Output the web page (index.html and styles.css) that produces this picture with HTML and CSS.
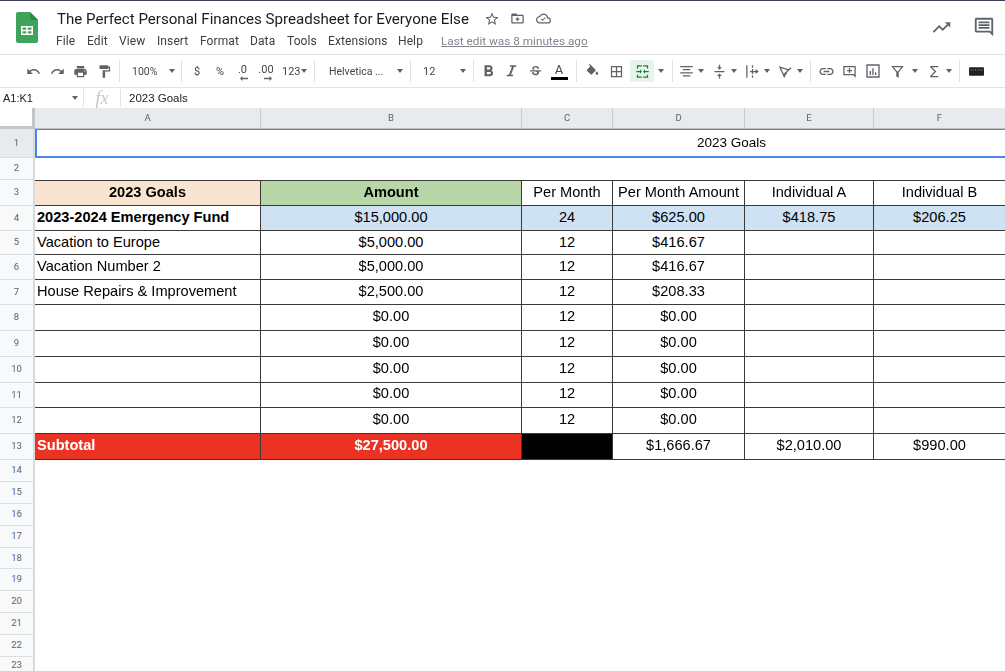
FILE: index.html
```html
<!DOCTYPE html>
<html lang="en">
<head>
<meta charset="utf-8">
<title>The Perfect Personal Finances Spreadsheet for Everyone Else</title>
<link rel="stylesheet" href="styles.css">
</head>
<body>
<div class="page">
  <header class="head">
    <svg class="logo" viewBox="0 0 22 31"><path fill="#3fa45b" d="M2 0h12l8 8v21a2 2 0 0 1-2 2H2a2 2 0 0 1-2-2V2a2 2 0 0 1 2-2z"/><path fill="#2b8a45" d="M14 0l8 8h-6a2 2 0 0 1-2-2z"/><path fill="#fff" d="M5 14h12v9H5zm1.5 1.5v2.2h3.7v-2.2zm5.3 0v2.2h3.7v-2.2zm-5.3 3.7v2.3h3.7v-2.3zm5.3 0v2.3h3.7v-2.3z" fill-rule="evenodd"/></svg>
    <div class="head-main">
      <div class="title-row">
        <h1 class="doc-title">The Perfect Personal Finances Spreadsheet for Everyone Else</h1>
        <svg class="doc-ic star" viewBox="0 0 24 24"><path d="M22 9.24l-7.19-.62L12 2 9.19 8.63 2 9.24l5.46 4.73L5.82 21 12 17.27 18.18 21l-1.63-7.03L22 9.24zM12 15.4l-3.76 2.27 1-4.28-3.32-2.88 4.38-.38L12 6.1l1.71 4.04 4.38.38-3.32 2.88 1 4.28L12 15.4z"/></svg>
        <svg class="doc-ic" viewBox="0 0 24 24"><path d="M20 6h-8l-2-2H4c-1.1 0-2 .9-2 2v12c0 1.1.9 2 2 2h16c1.1 0 2-.9 2-2V8c0-1.1-.9-2-2-2zm0 12H4V8h16v10z"/><path d="M11 10h2v2h2v2h-2v2h-2v-2H9v-2h2z"/></svg>
        <svg class="doc-ic" viewBox="0 0 24 24"><path d="M19.35 10.04C18.67 6.59 15.64 4 12 4 9.11 4 6.6 5.64 5.35 8.04 2.34 8.36 0 10.91 0 14c0 3.31 2.69 6 6 6h13c2.76 0 5-2.24 5-5 0-2.64-2.05-4.78-4.65-4.96zM19 18H6c-2.21 0-4-1.79-4-4 0-2.05 1.53-3.76 3.56-3.97l1.07-.11.5-.95C8.08 7.14 9.94 6 12 6c2.62 0 4.88 1.86 5.39 4.43l.3 1.5 1.53.11c1.56.1 2.78 1.41 2.78 2.96 0 1.65-1.35 3-3 3z"/><path d="M10.5 13.6l-1.6-1.6-1.1 1.1 2.7 2.7 4.9-4.9-1.1-1.1z"/></svg>
      </div>
      <nav class="menu">
        <span class="m-file">File</span><span class="m-edit">Edit</span><span class="m-view">View</span><span class="m-insert">Insert</span><span class="m-format">Format</span><span class="m-data">Data</span><span class="m-tools">Tools</span><span class="m-ext">Extensions</span><span class="m-help">Help</span>
        <a class="last-edit">Last edit was 8 minutes ago</a>
      </nav>
    </div>
    <div class="head-right">
      <svg class="trend" viewBox="0 0 24 24"><path d="M16 6l2.29 2.29-4.88 4.88-4-4L2 16.59 3.41 18l6-6 4 4 6.3-6.29L22 12V6z"/></svg>
      <svg class="comments" viewBox="0 0 24 24"><path d="M21.99 4c0-1.1-.89-2-1.99-2H4c-1.1 0-2 .9-2 2v12c0 1.1.9 2 2 2h14l4 4-.01-18zM20 4v13.17L18.83 16H4V4h16zM6 12h12v2H6zm0-3h12v2H6zm0-3h12v2H6z"/></svg>
    </div>
  </header>

  <div class="toolbar">
    <span class="b w24"><svg class="ic" viewBox="0 0 24 24"><path d="M12.5 8c-2.65 0-5.05.99-6.9 2.6L2 7v9h9l-3.62-3.62c1.39-1.16 3.16-1.88 5.12-1.88 3.54 0 6.55 2.31 7.6 5.5l2.37-.78C21.08 11.03 17.15 8 12.5 8z"/></svg></span>
    <span class="b w24"><svg class="ic" viewBox="0 0 24 24"><path d="M18.4 10.6C16.55 8.99 14.15 8 11.5 8c-4.65 0-8.58 3.03-9.96 7.22L3.9 16c1.05-3.19 4.05-5.5 7.6-5.5 1.95 0 3.73.72 5.12 1.88L13 16h9V7l-3.6 3.6z"/></svg></span>
    <span class="b w23"><svg class="ic" viewBox="0 0 24 24"><path d="M19 8H5c-1.66 0-3 1.34-3 3v6h4v4h12v-4h4v-6c0-1.66-1.34-3-3-3zm-3 11H8v-5h8v5zm3-7c-.55 0-1-.45-1-1s.45-1 1-1 1 .45 1 1-.45 1-1 1zm-1-9H6v4h12V3z"/></svg></span>
    <span class="b w24"><svg class="ic" viewBox="0 0 24 24"><path d="M18 4V3c0-.55-.45-1-1-1H5c-.55 0-1 .45-1 1v4c0 .55.45 1 1 1h12c.55 0 1-.45 1-1V6h1v4H9v11c0 .55.45 1 1 1h2c.55 0 1-.45 1-1v-9h8V4h-3z"/></svg></span>
    <i class="sep"></i>
    <span class="drop zoom"><span>100%</span><i class="caret"></i></span>
    <i class="sep"></i>
    <span class="b w24 t">$</span>
    <span class="b w22 t">%</span>
    <span class="b w23 t stack"><span>.0</span><svg class="tiny" viewBox="0 0 10 6"><path d="M0 3l3-3v2h7v2H3v2z"/></svg></span>
    <span class="b w24 t stack"><span>.00</span><svg class="tiny" viewBox="0 0 10 6"><path d="M10 3L7 0v2H0v2h7v2z"/></svg></span>
    <span class="drop fmt"><span>123</span><i class="caret"></i></span>
    <i class="sep"></i>
    <span class="drop font"><span>Helvetica ...</span><i class="caret"></i></span>
    <i class="sep"></i>
    <span class="drop size"><span>12</span><i class="caret"></i></span>
    <i class="sep"></i>
    <span class="b w22"><svg class="ic big" viewBox="0 0 24 24"><path d="M15.6 10.79c.97-.67 1.65-1.77 1.65-2.79 0-2.26-1.75-4-4-4H7v14h7.04c2.09 0 3.71-1.7 3.71-3.79 0-1.52-.86-2.82-2.15-3.42zM10 6.5h3c.83 0 1.5.67 1.5 1.5s-.67 1.5-1.5 1.500h-3v-3zm3.500 9H10v-3h3.500c.83 0 1.500.67 1.500 1.500s-.67 1.500-1.500 1.500z"/></svg></span>
    <span class="b w24"><svg class="ic big" viewBox="0 0 24 24"><path d="M10 4v2h2.600l-3.800 10H6v2h8v-2h-2.600l3.800-10H18V4z"/></svg></span>
    <span class="b w24"><svg class="ic" viewBox="0 0 24 24"><path d="M6.85 7.08C6.85 4.37 9.45 3 12.24 3c1.64 0 3 .49 3.9 1.28.77.65 1.46 1.73 1.46 3.24h-3.01c0-.31-.05-.59-.15-.85-.29-.86-1.2-1.28-2.25-1.28-1.86 0-2.34.95-2.34 1.69 0 .48.25.88.74 1.21.38.25.77.48 1.41.7H7.39c-.21-.34-.54-.89-.54-1.91zM21 12v-2H3v2h9.62c1.15.45 1.96.75 1.96 1.97 0 1-.81 1.67-2.28 1.67-1.54 0-2.93-.54-2.93-2.52H6.4c0 .55.08 1.13.24 1.58.81 2.29 3.29 3.3 5.67 3.3 2.27 0 5.3-.89 5.3-4.05 0-.3-.01-1.16-.48-1.94H21V12z"/></svg></span>
    <span class="b w24 text-color"><span class="a">A</span><i class="a-bar"></i></span>
    <i class="sep sep-wide"></i>
    <span class="b w24"><svg class="ic" viewBox="0 0 24 24"><path d="M16.56 8.94L7.62 0 6.21 1.41l2.38 2.38-5.15 5.15c-.59.59-.59 1.54 0 2.12l5.5 5.5c.29.29.68.44 1.06.44s.77-.15 1.06-.44l5.5-5.5c.59-.58.59-1.53 0-2.12zM19 11.5s-2 2.17-2 3.5c0 1.1.9 2 2 2s2-.9 2-2c0-1.33-2-3.5-2-3.5z"/></svg></span>
    <span class="b w25"><svg class="ic" viewBox="0 0 24 24"><path d="M3 3v18h18V3H3zm8 16H5v-6h6v6zm0-8H5V5h6v6zm8 8h-6v-6h6v6zm0-8h-6V5h6v6z"/></svg></span>
    <span class="merge"><svg class="ic green" viewBox="0 0 24 24"><path d="M3 2h8v2H5v3H3zM13 2h8v5h-2V4h-6zM3 17h2v3h6v2H3zM19 17h2v5h-8v-2h6zM2 11h6V8.500l3 3.500-3 3.500V13H2zM22 11h-6V8.500L13 12l3 3.500V13h6z"/></svg></span>
    <span class="b w14"><i class="caret"></i></span>
    <i class="sep sep-r1"></i>
    <span class="b w24"><svg class="ic" viewBox="0 0 24 24"><path d="M2 3h20v2H2zM6 8h12v2H6zM2 13h20v2H2zM6 18h12v2H6z"/></svg></span>
    <span class="b w9"><i class="caret"></i></span>
    <span class="b w24"><svg class="ic" viewBox="0 0 24 24"><path d="M8 19h3v4h2v-4h3l-4-4-4 4zm8-14h-3V1h-2v4H8l4 4 4-4zM4 11v2h16v-2H4z"/></svg></span>
    <span class="b w9"><i class="caret"></i></span>
    <span class="b w24"><svg class="ic" viewBox="0 0 24 24"><path d="M2 2h2v20H2zM11 2h2v4h-2zM11 18h2v4h-2zM8 11h3V8h2v3h4V8l5 4-5 4v-3h-4v3h-2v-3H8z"/></svg></span>
    <span class="b w9"><i class="caret"></i></span>
    <span class="b w24"><svg class="ic stroked" viewBox="0 0 24 24"><path d="M3 5l13 4-6 11zM9 17L21 6"/></svg></span>
    <span class="b w9"><i class="caret"></i></span>
    <i class="sep sep-r2"></i>
    <span class="b w24"><svg class="ic link" viewBox="0 0 24 24"><path d="M3.9 12c0-1.71 1.39-3.1 3.1-3.1h4V7H7c-2.76 0-5 2.24-5 5s2.24 5 5 5h4v-1.900H7c-1.71 0-3.100-1.390-3.100-3.100zM8 13h8v-2H8v2zm9-6h-4v1.900h4c1.710 0 3.100 1.390 3.100 3.100s-1.390 3.100-3.100 3.100h-4V17h4c2.760 0 5-2.240 5-5s-2.240-5-5-5z"/></svg></span>
    <span class="b w23"><svg class="ic" viewBox="0 0 24 24"><path d="M2 3h20v19l-4-4H2zm2 2v11h15l1 1V5z" fill-rule="evenodd"/><path d="M11 6.500h2V9.500h3v2h-3v3h-2v-3H8v-2h3z"/></svg></span>
    <span class="b w24"><svg class="ic chart" viewBox="0 0 24 24"><path d="M2 2h20v20H2zm2 2v16h16V4z" fill-rule="evenodd"/><path d="M7 12h2v6H7zM11 8h2v10h-2zM15 14h2v4h-2z"/></svg></span>
    <span class="b w24"><svg class="ic" viewBox="0 0 24 24"><path d="M2 3h20l-8 10v9l-4-2v-7zm4 2l6 7.500L18 5z" fill-rule="evenodd"/></svg></span>
    <span class="b w12"><i class="caret"></i></span>
    <span class="b w24 sigma-b"><svg class="ic" viewBox="0 0 24 24"><path d="M18 3H5v2l7 7-7 7v2h13v-2H8l7-7-7-7h10z"/></svg></span>
    <span class="b w9"><i class="caret"></i></span>
    <i class="sep sep-r3"></i>
    <span class="b w24"><svg class="kbd" viewBox="0 0 16 9"><rect width="16" height="9" rx="1" fill="#202124"/><path d="M2 2v2M4.500 2v2M7 2v2M9.500 2v2M12 2v2M14 2v2" stroke="#777" stroke-width=".8"/></svg></span>
  </div>

  <div class="formula">
    <div class="namebox"><span>A1:K1</span><i class="caret"></i></div>
    <i class="fsep"></i>
    <span class="fx">fx</span>
    <i class="fsep"></i>
    <span class="fvalue">2023 Goals</span>
  </div>

  <div class="sheet">
    <div class="corner"></div>
    <div class="col sel">A</div><div class="col sel">B</div><div class="col sel">C</div><div class="col sel">D</div><div class="col sel">E</div><div class="col sel">F</div><div class="col sel tail"></div>

    <div class="rh rh-sel">1</div>
    <div class="merged">2023 Goals</div>

    <div class="rh">2</div>

    <div class="rh">3</div>
    <div class="c top bold peach">2023 Goals</div>
    <div class="c top bold green-bg">Amount</div>
    <div class="c top">Per Month</div>
    <div class="c top">Per Month Amount</div>
    <div class="c top">Individual A</div>
    <div class="c top">Individual B</div>

    <div class="rh">4</div>
    <div class="c low left bold">2023-2024 Emergency Fund</div>
    <div class="c low blue">$15,000.00</div>
    <div class="c low blue">24</div>
    <div class="c low blue">$625.00</div>
    <div class="c low blue">$418.75</div>
    <div class="c low blue">$206.25</div>

    <div class="rh">5</div>
    <div class="c low left">Vacation to Europe</div>
    <div class="c low">$5,000.00</div><div class="c low">12</div><div class="c low">$416.67</div><div class="c"></div><div class="c"></div>

    <div class="rh">6</div>
    <div class="c low left">Vacation Number 2</div>
    <div class="c low">$5,000.00</div><div class="c low">12</div><div class="c low">$416.67</div><div class="c"></div><div class="c"></div>

    <div class="rh">7</div>
    <div class="c low left">House Repairs &amp; Improvement</div>
    <div class="c low">$2,500.00</div><div class="c low">12</div><div class="c low">$208.33</div><div class="c"></div><div class="c"></div>

    <div class="rh">8</div>
    <div class="c"></div><div class="c">$0.00</div><div class="c">12</div><div class="c">$0.00</div><div class="c"></div><div class="c"></div>
    <div class="rh">9</div>
    <div class="c"></div><div class="c">$0.00</div><div class="c">12</div><div class="c">$0.00</div><div class="c"></div><div class="c"></div>
    <div class="rh">10</div>
    <div class="c"></div><div class="c">$0.00</div><div class="c">12</div><div class="c">$0.00</div><div class="c"></div><div class="c"></div>
    <div class="rh">11</div>
    <div class="c"></div><div class="c">$0.00</div><div class="c">12</div><div class="c">$0.00</div><div class="c"></div><div class="c"></div>
    <div class="rh">12</div>
    <div class="c"></div><div class="c">$0.00</div><div class="c">12</div><div class="c">$0.00</div><div class="c"></div><div class="c"></div>

    <div class="rh">13</div>
    <div class="c left bold red">Subtotal</div>
    <div class="c bold red">$27,500.00</div>
    <div class="c black"></div>
    <div class="c">$1,666.67</div>
    <div class="c">$2,010.00</div>
    <div class="c">$990.00</div>

    <div class="rh">14</div><div class="rh">15</div><div class="rh">16</div><div class="rh">17</div><div class="rh">18</div><div class="rh">19</div><div class="rh">20</div><div class="rh">21</div><div class="rh">22</div><div class="rh rh-last">23</div>
  </div>
</div>
</body>
</html>
```

FILE: styles.css
```css
* { box-sizing: border-box; }
html, body { margin: 0; padding: 0; background: #fff; overflow: hidden; }
.page {
  width: 1005px;
  height: 671px;
  overflow: hidden;
  font-family: Roboto, "Liberation Sans", sans-serif;
  color: #202124;
  filter: blur(0.3px);
}

/* document header */
.head {
  height: 55px;
  display: flex;
  border-top: 1px solid #3f3d56;
  border-bottom: 1px solid #e3e3e3;
}
.logo { width: 22px; height: 31px; margin: 11px 19px 0 16px; flex: none; }
.head-main { flex: 1; }
.title-row { display: flex; align-items: center; height: 35px; }
.doc-title {
  margin: 0;
  font-size: 15.1px;
  font-weight: 400;
  color: #1b1b1b;
  width: 427px;
  white-space: nowrap;
}
.doc-ic { width: 15px; height: 15px; margin-right: 11px; fill: #5f6368; flex: none; }
.doc-ic.star { width: 16px; height: 16px; margin-right: 10px; }
.menu {
  display: flex;
  align-items: center;
  height: 14px;
  margin: -2px 0 0 -1px;
  font-size: 12px;
  letter-spacing: .1px;
  color: #3c4043;
}
.menu span { flex: none; }
.m-file { width: 31px; }
.m-edit { width: 32px; }
.m-view { width: 38px; }
.m-insert { width: 43px; }
.m-format { width: 50px; }
.m-data { width: 37px; }
.m-tools { width: 41px; }
.m-ext { width: 70px; }
.m-help { width: 43px; }
.last-edit { color: #80868b; font-size: 11.75px; letter-spacing: 0; text-decoration: underline; white-space: nowrap; }
.head-right { display: flex; align-items: flex-start; padding-top: 16px; flex: none; }
.trend { width: 21px; height: 21px; fill: #5f6368; margin-right: 21px; }
.comments { width: 22px; height: 22px; fill: #5f6368; margin-right: 10px; margin-top: -1px; }

/* toolbar */
.toolbar {
  height: 33px;
  display: flex;
  align-items: center;
  padding-left: 21px;
  border-bottom: 1px solid #e3e3e3;
  font-size: 10.5px;
  color: #444746;
}
.b { display: flex; flex: none; align-items: center; justify-content: center; height: 22px; }
.w9 { width: 9px; }
.w9 .caret { margin-right: 3px; }
.w12 { width: 12px; }
.w14 { width: 14px; }
.w22 { width: 22px; }
.w23 { width: 23px; }
.w24 { width: 24px; }
.w25 { width: 25px; }
.t { font-size: 11px; }
.ic { width: 15px; height: 15px; fill: #5f6368; }
.ic.green { fill: #188038; }
.ic.link { width: 17px; height: 17px; }
.ic.chart { width: 16px; height: 16px; }
.ic.big { width: 19px; height: 19px; }
.ic.stroked { fill: none; stroke: #5f6368; stroke-width: 2; }
.sep { flex: none; width: 1px; height: 22px; background: #e3e3e3; margin: 0 3px; }
.sep-wide { margin-left: 5px; }
.sep-r1 { margin-left: 4px; margin-right: 1px; }
.sep-r2 { margin-left: 4px; }
.sep-r3 { margin-left: 4px; margin-right: 4px; }
.caret {
  display: block;
  flex: none;
  width: 0;
  height: 0;
  border-left: 3.5px solid transparent;
  border-right: 3.5px solid transparent;
  border-top: 4px solid #5f6368;
}
.drop { display: flex; flex: none; align-items: center; justify-content: space-between; height: 22px; white-space: nowrap; }
.zoom { width: 55px; padding: 0 3.5px 0 9px; }
.fmt { width: 33px; padding: 0 4.5px 0 4px; font-size: 11px; }
.font { width: 89px; padding: 0 4.5px 0 11px; }
.size { width: 56px; padding: 0 4.5px 0 9px; font-size: 11px; }
.stack { flex-direction: column; line-height: 10px; padding-top: 3px; }
.tiny { width: 8px; height: 5px; fill: #5f6368; margin-top: 1px; margin-left: 3px; }
.text-color { flex-direction: column; }
.a { font-size: 13px; line-height: 13px; color: #444746; }
.a-bar { display: block; width: 17px; height: 3px; background: #000; margin-top: 1px; }
.merge { display: flex; flex: none; align-items: center; justify-content: center; width: 24px; height: 22px; background: #e6f4ea; margin-left: 1px; }
.kbd { width: 15px; height: 9px; }
.sigma-b { margin-left: 1px; }

/* formula bar */
.formula {
  height: 20px;
  display: flex;
  align-items: center;
  font-size: 11.5px;
  color: #202124;
}
.namebox { display: flex; align-items: center; justify-content: space-between; width: 83px; padding: 0 5.5px 0 3px; font-family: "Liberation Sans", sans-serif; font-size: 11px; }
.fsep { flex: none; width: 1px; height: 18px; background: #e3e3e3; }
.fx { width: 36px; text-align: center; font-family: "Liberation Serif", serif; font-style: italic; font-size: 18px; line-height: 18px; color: #c4c7c5; }
.fvalue { margin-left: 8px; font-family: "Liberation Sans", sans-serif; }

/* sheet grid */
.sheet {
  display: grid;
  width: 1427px;
  font-family: "Liberation Sans", Arial, sans-serif;
  font-size: 14.6px;
  color: #000;
  grid-template-columns: 35px 226px 261px 91px 132px 129px 132px 421px;
  grid-template-rows: 21px 29px 22px 26px 25px 24px 25px 25px 26px 26px 26px 25px 26px 26px 22px 22px 22px 22px 21px 22px 22px 22px 22px 15px;
}
.corner { background: #fff; border-right: 3px solid #c3c5c7; border-bottom: 3px solid #c3c5c7; }
.col {
  display: flex;
  align-items: center;
  justify-content: center;
  padding-bottom: 2px;
  font-size: 9.5px;
  font-family: Roboto, "Liberation Sans", sans-serif;
  color: #5f6368;
  background: #e8eaed;
  border-right: 1px solid #c8cacd;
  border-bottom: 1px solid #bdc1c6;
}
.col.tail { border-right: 0; }
.rh {
  grid-column: 1;
  display: flex;
  align-items: center;
  justify-content: center;
  padding-bottom: 2px;
  font-size: 9.5px;
  font-family: Roboto, "Liberation Sans", sans-serif;
  color: #5f6368;
  background: #f8f9fa;
  border-right: 2px solid #d8dadc;
  border-bottom: 1px solid #dcdee0;
}
.rh-sel { background: #e8eaed; }
.rh-last { padding-bottom: 0; border-bottom: 0; }
.merged {
  grid-column: span 7;
  display: flex;
  align-items: center;
  justify-content: center;
  padding-bottom: 1px;
  font-size: 13.5px;
  background: #fff;
  border: 1px solid #4a86e8;
  border-bottom-width: 2px;
  border-left-width: 2px;
}
.c {
  display: flex;
  align-items: center;
  justify-content: center;
  padding-bottom: 4px;
  background: #fff;
  border-right: 1px solid #3a3a3a;
  border-bottom: 1px solid #3a3a3a;
  white-space: nowrap;
  overflow: hidden;
}
.c.low { padding-bottom: 2px; }
.c.top { border-top: 1px solid #3a3a3a; padding-bottom: 3px; }
.c.left { justify-content: flex-start; padding-left: 2px; }
.bold { font-weight: 700; }
.peach { background: #f9e5cf; }
.green-bg { background: #b8d7a8; }
.blue { background: #cfe2f3; }
.red { background: #ea3323; color: #fff; }
.black { background: #000; }
```
